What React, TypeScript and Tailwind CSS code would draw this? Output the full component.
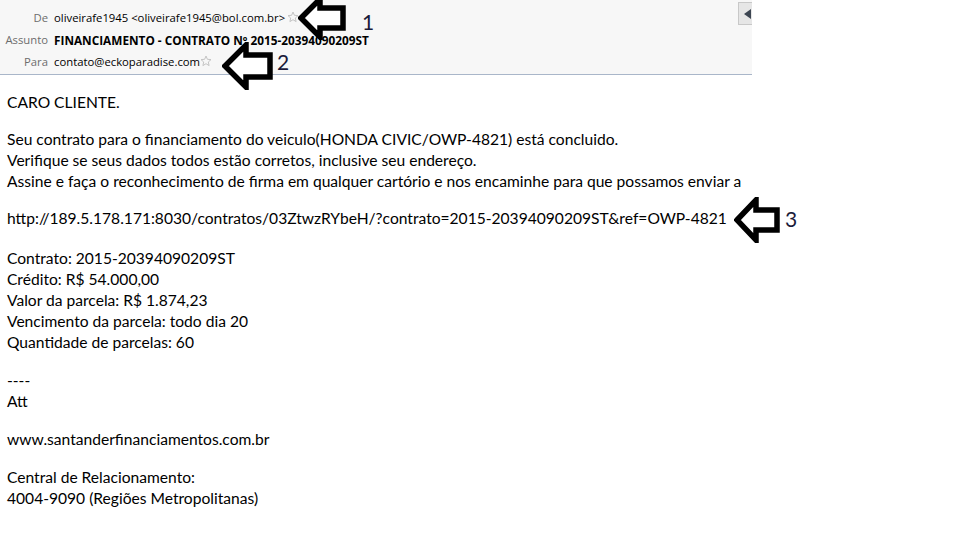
function Star({ className }: { className?: string }) {
  return (
    <svg viewBox="0 0 12 12" className={className} width="12" height="12">
      <path
        d="M6 1 L7.4 4.3 L11 4.6 L8.3 7 L9.1 10.6 L6 8.7 L2.9 10.6 L3.7 7 L1 4.6 L4.6 4.3 Z"
        fill="none"
        stroke="#c4c4c4"
        strokeWidth="1"
        strokeLinejoin="round"
      />
    </svg>
  );
}

// annotation arrow pointing left; head and shaft sizes in px
function Arrow({ w, h, shaft, head }: { w: number; h: number; shaft: number; head: number }) {
  const mid = h / 2;
  const pts = [
    [3, mid],
    [head, 3],
    [head, mid - shaft / 2],
    [w - 3, mid - shaft / 2],
    [w - 3, mid + shaft / 2],
    [head, mid + shaft / 2],
    [head, h - 3],
  ]
    .map((p) => p.join(","))
    .join(" ");
  return (
    <svg width={w} height={h} viewBox={`0 0 ${w} ${h}`}>
      <polygon points={pts} fill="white" stroke="black" strokeWidth="5.5" strokeLinejoin="miter" />
    </svg>
  );
}

const body = "font-['Lato',_'Open_Sans',sans-serif] text-[15.6px] leading-[21px] text-black";

export default function App() {
  return (
    <div className="relative w-[960px] h-[540px] bg-white overflow-hidden">
      <div className="w-[752px] overflow-hidden">
        <header className="relative h-[75px] bg-[#f7f7f7] border-b border-[#a9b6c9] pt-[7px] font-['Open_Sans',sans-serif] text-[11.3px] leading-[22px] text-black">
          <div className="flex">
            <span className="w-[48px] text-right text-[#6d6d6d]">De</span>
            <span className="ml-[6px]">oliveirafe1945 &lt;oliveirafe1945@bol.com.br&gt;</span>
            <Star className="ml-[2px] mt-[4px]" />
          </div>
          <div className="flex">
            <span className="w-[48px] text-right text-[#6d6d6d]">Assunto</span>
            <span className="ml-[6px] font-bold text-[11.8px]">FINANCIAMENTO - CONTRATO Nº 2015-20394090209ST</span>
          </div>
          <div className="flex">
            <span className="w-[48px] text-right text-[#6d6d6d]">Para</span>
            <span className="ml-[6px]">contato@eckoparadise.com</span>
            <Star className="mt-[4px]" />
          </div>
          <div className="absolute right-0 top-[2px] w-[14px] h-[23px] bg-[#e6e6e6] border border-r-0 border-[#c8c8c8] flex items-center justify-end">
            <svg width="9" height="10" viewBox="0 0 9 10">
              <path d="M1 5 L8 0 L8 10 Z" fill="#3d4652" />
            </svg>
          </div>
        </header>

        <main className={`${body} px-[7px] pt-[17px] whitespace-nowrap`}>
          <p>CARO CLIENTE.</p>
          <div className="mt-[16px]">
            <p>Seu contrato para o financiamento do veiculo(HONDA CIVIC/OWP-4821) está concluido.</p>
            <p>Verifique se seus dados todos estão corretos, inclusive seu endereço.</p>
            <p>Assine e faça o reconhecimento de firma em qualquer cartório e nos encaminhe para que possamos enviar a</p>
          </div>
          <p className="mt-[16px]">http://189.5.178.171:8030/contratos/03ZtwzRYbeH/?contrato=2015-20394090209ST&amp;ref=OWP-4821</p>
          <div className="mt-[19px]">
            <p>Contrato: 2015-20394090209ST</p>
            <p>Crédito: R$ 54.000,00</p>
            <p>Valor da parcela: R$ 1.874,23</p>
            <p>Vencimento da parcela: todo dia 20</p>
            <p>Quantidade de parcelas: 60</p>
          </div>
          <div className="mt-[17px]">
            <p>----</p>
            <p>Att</p>
          </div>
          <p className="mt-[17px]">www.santanderfinanciamentos.com.br</p>
          <div className="mt-[17px]">
            <p>Central de Relacionamento:</p>
            <p>4004-9090 (Regiões Metropolitanas)</p>
          </div>
        </main>
      </div>

      {/* annotations drawn over the screenshot */}
      <div className="absolute left-[298px] top-[-4px]">
        <Arrow w={48} h={44} shaft={20} head={22} />
      </div>
      <span className="absolute left-[362px] top-[10px] font-['Lato',sans-serif] text-[21px] leading-[24px] text-[#1b1b3a]">1</span>
      <div className="absolute left-[222px] top-[42px]">
        <Arrow w={51} h={48} shaft={22} head={24} />
      </div>
      <span className="absolute left-[277px] top-[50px] font-['Lato',sans-serif] text-[21px] leading-[24px] text-[#1b1b3a]">2</span>
      <div className="absolute left-[734px] top-[197px]">
        <Arrow w={46} h={46} shaft={20} head={22} />
      </div>
      <span className="absolute left-[785px] top-[207px] font-['Lato',sans-serif] text-[21px] leading-[24px] text-[#1b1b3a]">3</span>
    </div>
  );
}
